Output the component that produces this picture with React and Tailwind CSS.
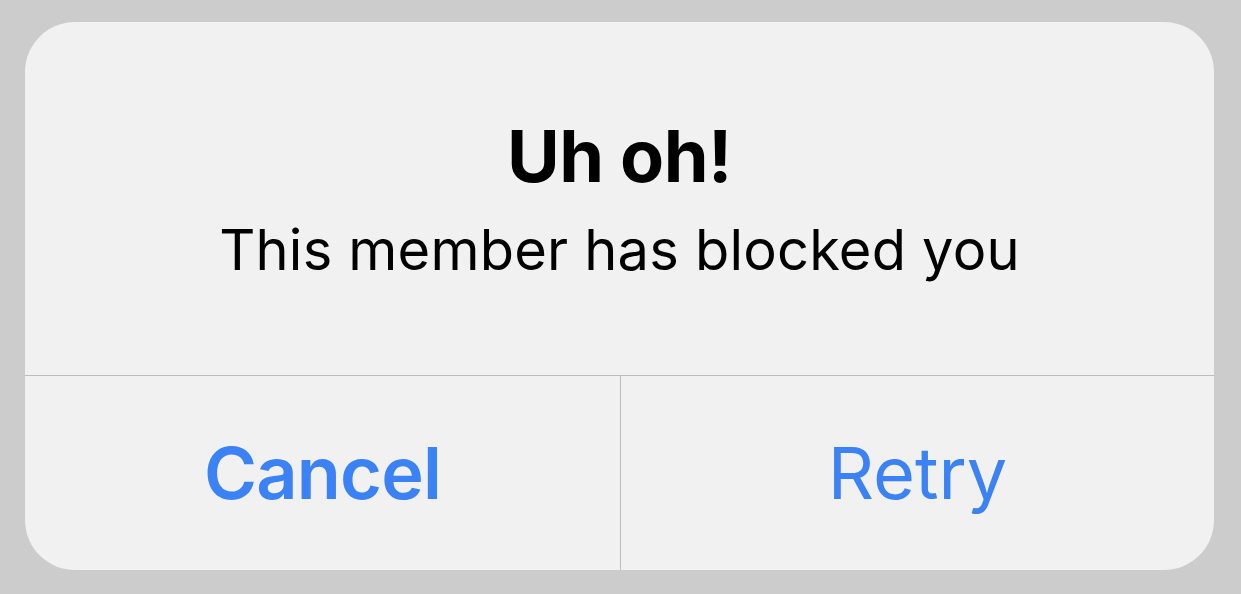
import React from 'react';

export default function App() {
  return (
    <div className="w-[1241px] h-[594px] bg-[#cccccc] pl-[25px] pr-[27px] pt-[22px] pb-[24px]" style={{ fontFamily: 'Inter, "Noto Sans", sans-serif' }}>
      <div className="h-full bg-[#f1f1f1] rounded-[50px] flex flex-col overflow-hidden">
        {/* Message */}
        <div className="h-[354px] flex flex-col items-center border-b-[1.5px] border-[#bdbdbd]">
          <h1 className="mt-[98px] text-[72px] leading-none font-bold text-black tracking-[-0.5px]">Uh oh!</h1>
          <p className="mt-[30px] text-[56px] leading-none text-black tracking-[0.2px]">This member has blocked you</p>
        </div>

        {/* Actions */}
        <div className="flex-1 grid grid-cols-[596px_1fr]">
          <button className="flex items-center justify-center border-r-[1.5px] border-[#bdbdbd] text-[72px] font-semibold text-[#3b82f6] tracking-[-0.8px]">
            Cancel
          </button>
          <button className="flex items-center justify-center text-[72px] text-[#3b82f6]">
            Retry
          </button>
        </div>
      </div>
    </div>
  );
}
